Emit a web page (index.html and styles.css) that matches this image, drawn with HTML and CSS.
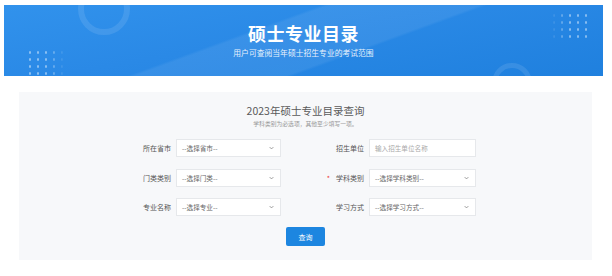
FILE: index.html
```html
<!DOCTYPE html>
<html lang="zh">
<head>
<meta charset="utf-8">
<link rel="stylesheet" href="styles.css">
</head>
<body>
<header class="banner">
  <span class="deco circle-a"></span>
  <span class="deco circle-b"></span>
  <span class="deco band"></span>
  <span class="deco dots dots-l"></span>
  <span class="deco dots dots-r"></span>
  <h1 class="banner-title">硕士专业目录</h1>
  <p class="banner-sub">用户可查阅当年硕士招生专业的考试范围</p>
</header>
<main class="panel">
  <h2 class="panel-title">2023年硕士专业目录查询</h2>
  <p class="panel-sub">学科类别为必选项，其他至少填写一项。</p>
  <form class="form">
    <label class="lbl">所在省市</label>
    <div class="field select"><span>--选择省市--</span><svg class="chev" viewBox="0 0 8 5"><path d="M1 1 L4 4 L7 1" fill="none" stroke="#666" stroke-width="1"/></svg></div>
    <label class="lbl">招生单位</label>
    <div class="field input"><span class="ph">输入招生单位名称</span></div>

    <label class="lbl">门类类别</label>
    <div class="field select"><span>--选择门类--</span><svg class="chev" viewBox="0 0 8 5"><path d="M1 1 L4 4 L7 1" fill="none" stroke="#666" stroke-width="1"/></svg></div>
    <label class="lbl"><i class="req">*</i>学科类别</label>
    <div class="field select"><span>--选择学科类别--</span><svg class="chev" viewBox="0 0 8 5"><path d="M1 1 L4 4 L7 1" fill="none" stroke="#666" stroke-width="1"/></svg></div>

    <label class="lbl">专业名称</label>
    <div class="field select"><span>--选择专业--</span><svg class="chev" viewBox="0 0 8 5"><path d="M1 1 L4 4 L7 1" fill="none" stroke="#666" stroke-width="1"/></svg></div>
    <label class="lbl">学习方式</label>
    <div class="field select"><span>--选择学习方式--</span><svg class="chev" viewBox="0 0 8 5"><path d="M1 1 L4 4 L7 1" fill="none" stroke="#666" stroke-width="1"/></svg></div>
  </form>
  <div class="actions"><button class="btn" type="button">查询</button></div>
</main>
</body>
</html>
```
FILE: styles.css
```css
* { box-sizing: border-box; }
html, body { margin: 0; padding: 0; background: #fff; }
body {
  font-family: "Noto Sans CJK SC", "Noto Sans", sans-serif;
  width: 612px;
  height: 276px;
  overflow: hidden;
}
.banner {
  position: relative;
  overflow: hidden;
  margin: 5px 9px 0 4px;
  height: 71px;
  background: linear-gradient(170deg, #3192ec 0%, #2a89e6 45%, #1f80de 100%);
  display: flex;
  flex-direction: column;
  align-items: center;
  color: #fff;
}
.deco { position: absolute; display: block; }
.band {
  left: 0; top: 0; width: 100%; height: 100%;
  background: linear-gradient(160deg, rgba(255,255,255,0) 40%, rgba(255,255,255,0.07) 41%, rgba(255,255,255,0.07) 60%, rgba(255,255,255,0) 61%);
}
.circle-a {
  left: 74px; top: -22px; width: 52px; height: 52px;
  border-radius: 50%;
  border: 6px solid rgba(255,255,255,0.10);
}
.circle-b {
  left: 488px; top: 58px; width: 40px; height: 40px;
  border-radius: 50%;
  border: 5px solid rgba(255,255,255,0.10);
}
.dots {
  width: 40px; height: 28px;
  background-image: radial-gradient(circle, rgba(255,255,255,0.45) 1px, transparent 1.4px);
  background-size: 8px 7px;
}
.dots-l { left: 22px; top: 44px; -webkit-mask-image: linear-gradient(90deg, #000 50%, transparent); mask-image: linear-gradient(90deg, #000 50%, transparent); }
.dots-r { left: 546px; top: 7px; -webkit-mask-image: linear-gradient(270deg, #000 50%, transparent); mask-image: linear-gradient(270deg, #000 50%, transparent); }
.banner-title {
  position: relative;
  margin: 17px 0 0;
  font-size: 18px;
  line-height: 22px;
  font-weight: 700;
  letter-spacing: 0.5px;
}
.banner-sub {
  position: relative;
  margin: 4px 0 0;
  font-size: 7.8px;
  line-height: 10px;
  color: rgba(255,255,255,0.9);
}
.panel {
  margin: 16px 0 0 19px;
  width: 573px;
  background: #f7f8fa;
  padding: 11px 0 14px;
  display: flex;
  flex-direction: column;
  align-items: center;
}
.panel-title {
  margin: 0;
  font-size: 10.5px;
  line-height: 15px;
  font-weight: 400;
  color: #5a5a5a;
}
.panel-sub {
  margin: 2px 0 0;
  font-size: 5.8px;
  line-height: 7px;
  color: #999;
}
.form {
  align-self: stretch;
  margin-top: 12px;
  display: grid;
  grid-template-columns: 157px 105px 88px 107px;
  grid-auto-rows: 18px;
  row-gap: 11.5px;
  align-items: center;
}
.lbl {
  text-align: right;
  padding-right: 5px;
  font-size: 7px;
  color: #555;
  line-height: 18px;
}
.req { font-style: normal; color: #e33; margin-right: 6px; }
.field {
  height: 18px;
  background: #fff;
  border: 1px solid #e6e8eb;
  display: flex;
  align-items: center;
  justify-content: space-between;
  padding: 0 6px 0 5px;
  font-size: 6.6px;
  color: #666;
}
.ph { color: #aaa; }
.chev { width: 5px; height: 4px; }
.actions { margin-top: 11px; display: flex; }
.btn {
  display: block;
  width: 39px;
  height: 19px;
  border: none;
  border-radius: 2px;
  background: #1d86e0;
  color: #fff;
  font-family: inherit;
  font-size: 7px;
  padding: 0;
}
```
